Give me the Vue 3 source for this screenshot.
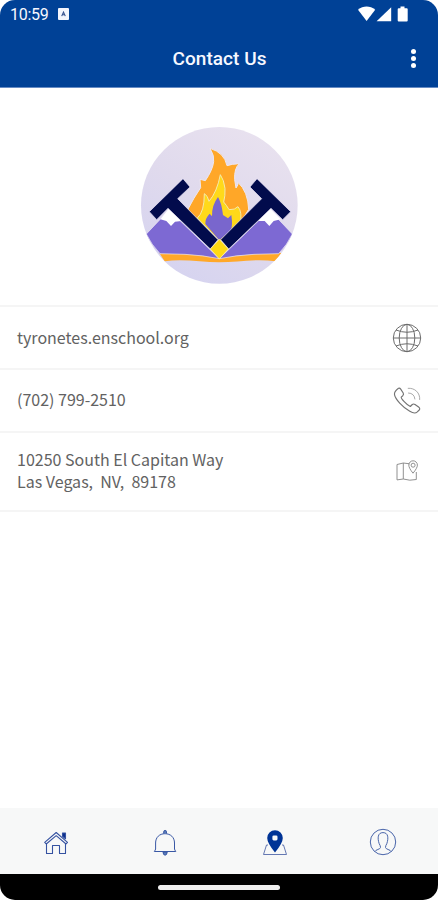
<script setup>
const dots = [0, 1, 2]
</script>

<template>
  <main class="phone">
    <header class="top">
      <div class="status">
        <span class="clock">10:59</span>
        <svg class="badge" width="11" height="12" viewBox="0 0 11 12">
          <rect width="11" height="12" rx="1" fill="#f3f5fd" />
          <path d="M3.7 8.100 5.500 4 7.300 8.100M4.300 6.800h2.400" fill="none" stroke="#36528f" stroke-width="1.1" />
        </svg>
        <svg class="signals" width="51" height="17" viewBox="0 0 51 17" fill="#fff">
          <path d="M0 3.800C5.200-.5 12-.5 17.200 3.800L8.600 15Z" />
          <path d="M33.200 1.300V15.300H18.600Z" />
          <path d="M42.500 .5h4v1.700h2.200q1 0 1 1V14.500q0 1-1 1h-8q-1 0-1-1V3.200q0-1 1-1h1.800Z" />
        </svg>
      </div>
      <div class="titlebar">
        <h1>Contact Us</h1>
        <div class="more"><i v-for="d in dots" :key="d"></i></div>
      </div>
    </header>

    <section class="hero">
      <svg width="170" height="170" viewBox="0 0 510 510">
        <defs>
          <linearGradient id="sky" x1="0.8" y1="0" x2="0.2" y2="1">
            <stop offset="0" stop-color="#e9e2ef" />
            <stop offset=".5" stop-color="#e0daed" />
            <stop offset="1" stop-color="#d5d3f0" />
          </linearGradient>
          <clipPath id="disc"><circle cx="253" cy="256" r="235" /></clipPath>
        </defs>
        <circle cx="253" cy="256" r="235" fill="url(#sky)" />
        <g clip-path="url(#disc)">
          <path d="M73 399C145 395 197 409 253 410S365 396 439 399L422 424C363 415 306 427 253 427S143 415 89 424Z" fill="#ffa829" />
          <path d="M34 342 102 270 253 416Q205 406 150 403L75 401Q49 374 34 342Z" fill="#7d69d3" stroke="#f1edf8" stroke-width="2" />
          <path d="M472 342 404 270 253 416Q302 406 357 403L431 401Q457 374 472 342Z" fill="#7d69d3" stroke="#f1edf8" stroke-width="2" />
          <path d="M76 298 103 264 139 303 120 305 108 318 94 303Z" fill="#fff" />
          <path d="M368 303 403 264 437 298 416 303 403 318 389 303Z" fill="#fff" />
        </g>
        <path d="M225 85Q268 98 276 137Q290 132 313 131Q297 145 299 179L303 204Q311 194 309 187Q339 215 341 268L310 320H205L157 271Q177 232 197 203L195 178L211 182Q233 150 236 125Q239 108 225 85Z" fill="#ffa728" stroke="#eee7ef" stroke-width="3" />
        <path d="M256 164Q267 180 270 205Q271 229 266 246Q275 256 282 269Q300 270 309 260Q323 276 315 315L256 365L187 294Q208 276 208 221Q218 226 222 244Q246 216 256 164Z" fill="#ffd91a" stroke="#f4eaac" stroke-width="3" />
        <path d="M249 231Q260 249 264 285L279 295L289 285Q294 318 287 332L253 361L211 312Q210 295 224 281L231 289Q230 256 249 231Z" fill="#7966cd" />
        <g fill="#020b4c" stroke="#eee9fa" stroke-width="2">
          <path d="M144 176 165 201 128 236 249 359 226 387 99 265 65 299 43 275Z" />
          <path d="M366 176 345 201 380 236 257 359 281 387 408 265 443 299 467 275Z" />
        </g>
        <path d="M253 358 280 387 253 417 226 387Z" fill="#ffd914" stroke="#fff0b0" stroke-width="2" />
      </svg>
    </section>

    <section class="contacts">
      <div class="row web">
        <span>tyronetes.enschool.org</span>
        <svg width="30" height="30" viewBox="0 0 30 30" fill="none" stroke="#6c6c6c" stroke-width="1">
          <circle cx="15" cy="15" r="13.700" />
          <ellipse cx="15" cy="15" rx="7.800" ry="13.700" />
          <path d="M15 1.300v27.400M1.300 15h27.400M4 7q11 4.500 22 0M4 23q11-4.500 22 0" />
        </svg>
      </div>
      <div class="row phone-number">
        <span>(702) 799-2510</span>
        <svg width="30" height="30" viewBox="0 0 30 30" fill="none" stroke="#737373" stroke-width="1.150" stroke-linejoin="round" stroke-linecap="round">
          <path d="M6.500 2.300Q7.800 1.800 8.700 3.100L11.200 7Q12 8.500 10.800 9.700L9.200 11.100Q9 12.200 12.200 15.700T18.300 20.500L20.300 18.500Q21.500 17.500 23 18.500L26.600 21Q28.500 22.500 27.200 24L25.300 25.900Q22.700 28.300 17.800 25.300Q12 22 7.700 17.200Q3 11.800 2.500 8.600Q2 5.500 6.500 2.300Z" />
          <path d="M16.200 2.300C22.800 1.700 28.200 6.800 27.700 13.500M16.500 7Q22.300 7.200 22.900 13" stroke-width=".85" stroke="#999" />
        </svg>
      </div>
      <div class="row address">
        <span>10250 South El Capitan Way<br>Las Vegas,&nbsp; NV,&nbsp; 89178</span>
        <svg width="30" height="30" viewBox="0 0 30 30" fill="none" stroke="#858585" stroke-width=".9" stroke-linejoin="round">
          <path d="M17.500 7.800 11.300 7 5 8.500V23.900L11.300 23 17.800 24.200 24.300 23.500V16M11.300 7V23" />
          <path d="M21 17.200Q16.800 12 16.800 9.100A4.300 4.300 0 0 1 25.400 9.100Q25.400 12 21 17.200Z" />
          <circle cx="21.100" cy="9.200" r="2" />
        </svg>
      </div>
    </section>

    <nav>
      <a>
        <svg width="30" height="30" viewBox="0 0 30 30" fill="none" stroke="#3552a1" stroke-width="1.1" stroke-linejoin="round">
          <path d="M3.700 14.300 15.200 4.500 26.500 14.300 25 16 15.200 7.700 5.200 16ZM5.500 16V25.500H11.500V17.500H18.500V25.500H24.500V16" />
          <path d="M21.500 5h3v5.800l-3-2.500Z" fill="#0b2f8d" />
        </svg>
      </a>
      <a>
        <svg width="30" height="30" viewBox="0 0 30 30" fill="none" stroke="#3958a5" stroke-width="1" stroke-linejoin="round">
          <path d="M5.600 21V15C5.600 9.300 9.500 5.700 15 5.700S24.500 9.300 24.500 15V21Q24.700 22 25.800 23.500H4.300Q5.400 22 5.600 21Z" />
          <path d="M13.700 5.500V3.800a1.400 1.400 0 0 1 2.800 0v1.700M13 24q.2 3.200 2.100 3.200T17.200 24Z" fill="#5b7dba" />
        </svg>
      </a>
      <a>
        <svg width="30" height="30" viewBox="0 0 30 30">
          <path d="M8 17H6.500L3.500 26.500H26.500L23.500 17H22" fill="none" stroke="#5269a9" stroke-width=".9" />
          <path fill-rule="evenodd" d="M15 24.500Q7.200 15 7.200 10A7.800 7.800 0 0 1 22.800 10Q22.800 15 15 24.500ZM12.400 8.800v2.300q0 1.300 1.300 1.300h2.500q1.300 0 1.300-1.300V8.800q0-1.300-1.300-1.300h-2.500q-1.300 0-1.300 1.300Z" fill="#003496" />
        </svg>
      </a>
      <a class="profile">
        <svg width="30" height="30" viewBox="0 0 30 30" fill="none" stroke="#4965aa" stroke-width="1">
          <circle cx="15" cy="15" r="12.700" />
          <path d="M6.800 24.600C7.500 22.600 12.500 22.300 12.500 20.500Q12.500 18.700 11.200 16.700C9.400 11.400 9.500 5.600 15 5.600S20.600 11.400 18.800 16.700Q17.500 18.700 17.500 20.500C17.500 22.300 22.500 22.600 23.200 24.600" />
        </svg>
      </a>
    </nav>
    <footer><i></i></footer>
  </main>
</template>

<style>
body { margin: 0; background: #fff; }
</style>
<style scoped>
* { box-sizing: border-box; }
.phone { width: 438px; height: 900px; display: flex; flex-direction: column; overflow: hidden; border-radius: 15px; background: #fff; font-family: "Noto Sans CJK SC", sans-serif; }
.top { height: 88px; flex: none; background: #004196; border-bottom: 1px solid #668bc4; color: #f7f8ff; font-family: Roboto, sans-serif; }
.status { height: 29px; display: flex; align-items: center; padding: 0 29px 0 10px; }
.clock { font-size: 16px; line-height: 28px; letter-spacing: -.25px; }
.badge { margin-left: 9px; margin-top: -2px; }
.signals { margin-left: auto; margin-top: -1px; }
.titlebar { height: 58px; display: grid; grid-template-columns: 48px 1fr 48px; align-items: center; }
h1 { grid-column: 2; margin: 0; padding: 1px 0 0 1px; text-align: center; font-size: 19px; font-weight: 500; line-height: 58px; letter-spacing: .05px; }
.more { display: flex; flex-direction: column; gap: 2px; align-items: center; padding-right: 2px; }
.more i { width: 5px; height: 5px; border-radius: 50%; background: #fff; }
.hero { height: 217px; flex: none; padding-top: 32px; display: flex; justify-content: center; }
.hero svg { margin-left: 2px; }
.contacts { color: #626262; font-size: 16px; font-weight: 400; line-height: 22px; }
.row { display: flex; align-items: center; justify-content: space-between; padding: 0 16px 0 17px; border-top: 2px solid #f5f5f5; }
.row span { padding-bottom: 2px; }
.row.phone-number span { padding-bottom: 3px; }
.row.address span { padding-bottom: 1px; }
.web, .phone-number { height: 63px; }
.address { height: 81px; padding-bottom: 2px; border-bottom: 2px solid #f5f5f5; }
nav { height: 66px; margin-top: auto; flex: none; display: grid; grid-template-columns: repeat(4, 1fr); background: #f7f8f8; }
nav a { display: flex; align-items: center; justify-content: center; padding: 3px 0 0 2px; }
nav .profile { padding: 2px 0 0; }
footer { height: 26px; flex: none; background: #000; display: flex; justify-content: center; align-items: center; }
footer i { width: 122px; height: 5px; border-radius: 3px; background: #eee; }
</style>
